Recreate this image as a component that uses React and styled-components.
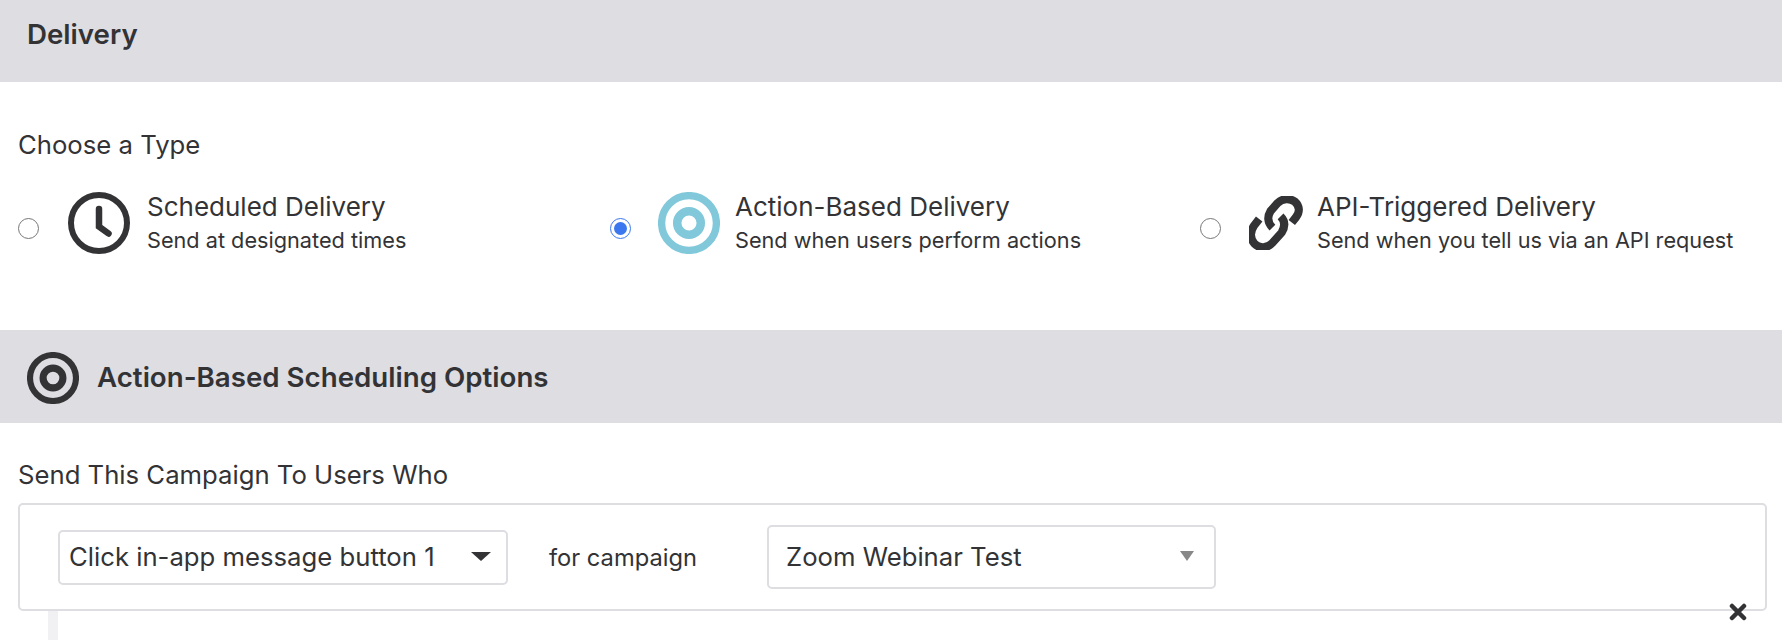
import React from "react";
import styled, { createGlobalStyle } from "styled-components";

const Global = createGlobalStyle`
  html, body { margin: 0; padding: 0; background: #fff; }
  body { font-family: "Inter", "Noto Sans", sans-serif; color: #333336; overflow: hidden; }
`;
const Page = styled.div`width: 1782px; height: 640px; overflow: hidden; background: #fff;`;
const Banner = styled.header`
  display: flex; align-items: ${p => p.$tall ? "center" : "flex-start"};
  gap: 18px; height: ${p => p.$tall ? "93px" : "82px"};
  padding: ${p => p.$tall ? "0 27px" : "17px 27px 0"}; box-sizing: border-box;
  background: #dddde2;
  & > svg { margin-top: 3px; }
`;
const BannerTitle = styled.h2`margin: 0; font-size: 27.7px; line-height: 34px; font-weight: 600; color: #333336; white-space: nowrap;`;
const TypeSection = styled.section`padding: 45px 18px 0; height: 248px; box-sizing: border-box;`;
const FieldLabel = styled.div`font-size: 25.7px; line-height: 36px; color: #333336; white-space: nowrap;`;
const TypeGrid = styled.div`display: grid; grid-template-columns: 592px 590px 1fr; margin-top: 29px;`;
const TypeOption = styled.label`display: flex; align-items: center; height: 62px;`;
const Radio = styled.span`
  width: 21px; height: 21px; border-radius: 50%; box-sizing: border-box; flex: none;
  border: 1.5px solid ${p => p.$on ? "#3b78f0" : "#77777a"};
  margin-top: 10px;
  display: flex; align-items: center; justify-content: center;
  &::after { content: ""; width: 13px; height: 13px; border-radius: 50%; background: ${p => p.$on ? "#3b78f0" : "transparent"}; }
`;
const IconSlot = styled.span`width: ${p => p.$w}px; height: 62px; flex: none; margin: 0 ${p => p.$gap}px 0 ${p => p.$left}px; display: flex; align-items: center; justify-content: center;`;
const TypeText = styled.div`display: flex; flex-direction: column;`;
const TypeTitle = styled.div`font-size: 26px; line-height: 32px; color: #333336; white-space: nowrap;`;
const TypeSub = styled.div`font-size: 21.7px; line-height: 30px; margin-top: 2px; color: #333336; white-space: nowrap;`;
const RuleSection = styled.section`padding: 34px 15px 0 18px; position: relative;`;
const RuleBox = styled.div`
  margin-top: 10px; height: 108px; box-sizing: border-box; border: 2px solid #dddde2; border-radius: 5px;
  display: flex; align-items: center; padding: 0 0 0 38px;
`;
const Select = styled.div`
  width: ${p => p.$w}px; height: ${p => p.$h}px; box-sizing: border-box; border: 2px solid #dddde2; border-radius: 5px;
  display: flex; align-items: center; justify-content: space-between;
  padding: 0 ${p => p.$pr}px 2px ${p => p.$pl}px;
  font-size: 25.7px; color: #333336; white-space: nowrap;
`;
const ForText = styled.span`font-size: 23.7px; color: #333336; width: 218px; flex: none; margin-left: 41px; white-space: nowrap;`;
const Caret = styled.span`
  width: 0; height: 0; border-left: ${p => p.$s}px solid transparent; border-right: ${p => p.$s}px solid transparent;
  border-top: ${p => p.$t}px solid ${p => p.$c};
`;
const Rail = styled.div`width: 10px; height: 30px; margin-left: 30px; background: #f1f1f4;`;
const Remove = styled.svg`position: absolute; right: 35px; top: 180px; width: 18px; height: 18px;`;

const Clock = ({ c = "#333336" }) => (
  <svg width="62" height="62" viewBox="0 0 62 62">
    <circle cx="31" cy="31" r="28" fill="none" stroke={c} strokeWidth="6" />
    <path d="M31 17v17.5l9.5 7" fill="none" stroke={c} strokeWidth="6.5" strokeLinecap="round" />
  </svg>
);
const Target = ({ c, s = 62 }) => (
  <svg width={s} height={s} viewBox="0 0 62 62">
    <circle cx="31" cy="31" r="27.4" fill="none" stroke={c} strokeWidth="7.3" />
    <circle cx="31" cy="31" r="11.8" fill="none" stroke={c} strokeWidth="8.5" />
  </svg>
);
const ChainLink = () => (
  <svg width="54" height="54" viewBox="10 12 53 53">
    <path d="M33 43C28 38 28 32 31 27L38 19C43 14 50 14 55 17.500C60 22 60 28 56 33L52 38" fill="none" stroke="#333336" strokeWidth="8" />
    <path d="M41 32C46 37 45 43 42 48L33 58C28 63.500 20 63.500 15.500 59C11 54 11 47 15 41L20 34.500" fill="none" stroke="#333336" strokeWidth="8" />
  </svg>
);

const Option = ({ on, left, w = 62, gap = 15, icon, title, sub }) => (
  <TypeOption>
    <Radio $on={on} />
    <IconSlot $left={left} $w={w} $gap={gap}>{icon}</IconSlot>
    <TypeText>
      <TypeTitle>{title}</TypeTitle>
      <TypeSub>{sub}</TypeSub>
    </TypeText>
  </TypeOption>
);

export default function App() {
  return (
    <Page>
      <Global />
      <Banner><BannerTitle>Delivery</BannerTitle></Banner>
      <TypeSection>
        <FieldLabel>Choose a Type</FieldLabel>
        <TypeGrid>
          <Option left={29} gap={17} icon={<Clock />} title="Scheduled Delivery" sub="Send at designated times" />
          <Option on left={27} icon={<Target c="#80c8da" />} title="Action-Based Delivery" sub="Send when users perform actions" />
          <Option left={28} w={54} gap={14} icon={<ChainLink />} title="API-Triggered Delivery" sub="Send when you tell us via an API request" />
        </TypeGrid>
      </TypeSection>
      <Banner $tall>
        <Target c="#333336" s={52} />
        <BannerTitle>Action-Based Scheduling Options</BannerTitle>
      </Banner>
      <RuleSection>
        <FieldLabel>Send This Campaign To Users Who</FieldLabel>
        <RuleBox>
          <Select $w={450} $h={55} $pl={9} $pr={15}>Click in-app message button 1<Caret $s={10} $t={9} $c="#333336" /></Select>
          <ForText>for campaign</ForText>
          <Select $w={449} $h={64} $pl={17} $pr={20}>Zoom Webinar Test<Caret $s={7} $t={10} $c="#888888" /></Select>
        </RuleBox>
        <Rail />
        <Remove viewBox="0 0 18 18"><path d="M3 3l12 12M15 3L3 15" stroke="#333336" strokeWidth="4.5" strokeLinecap="round" /></Remove>
      </RuleSection>
    </Page>
  );
}
